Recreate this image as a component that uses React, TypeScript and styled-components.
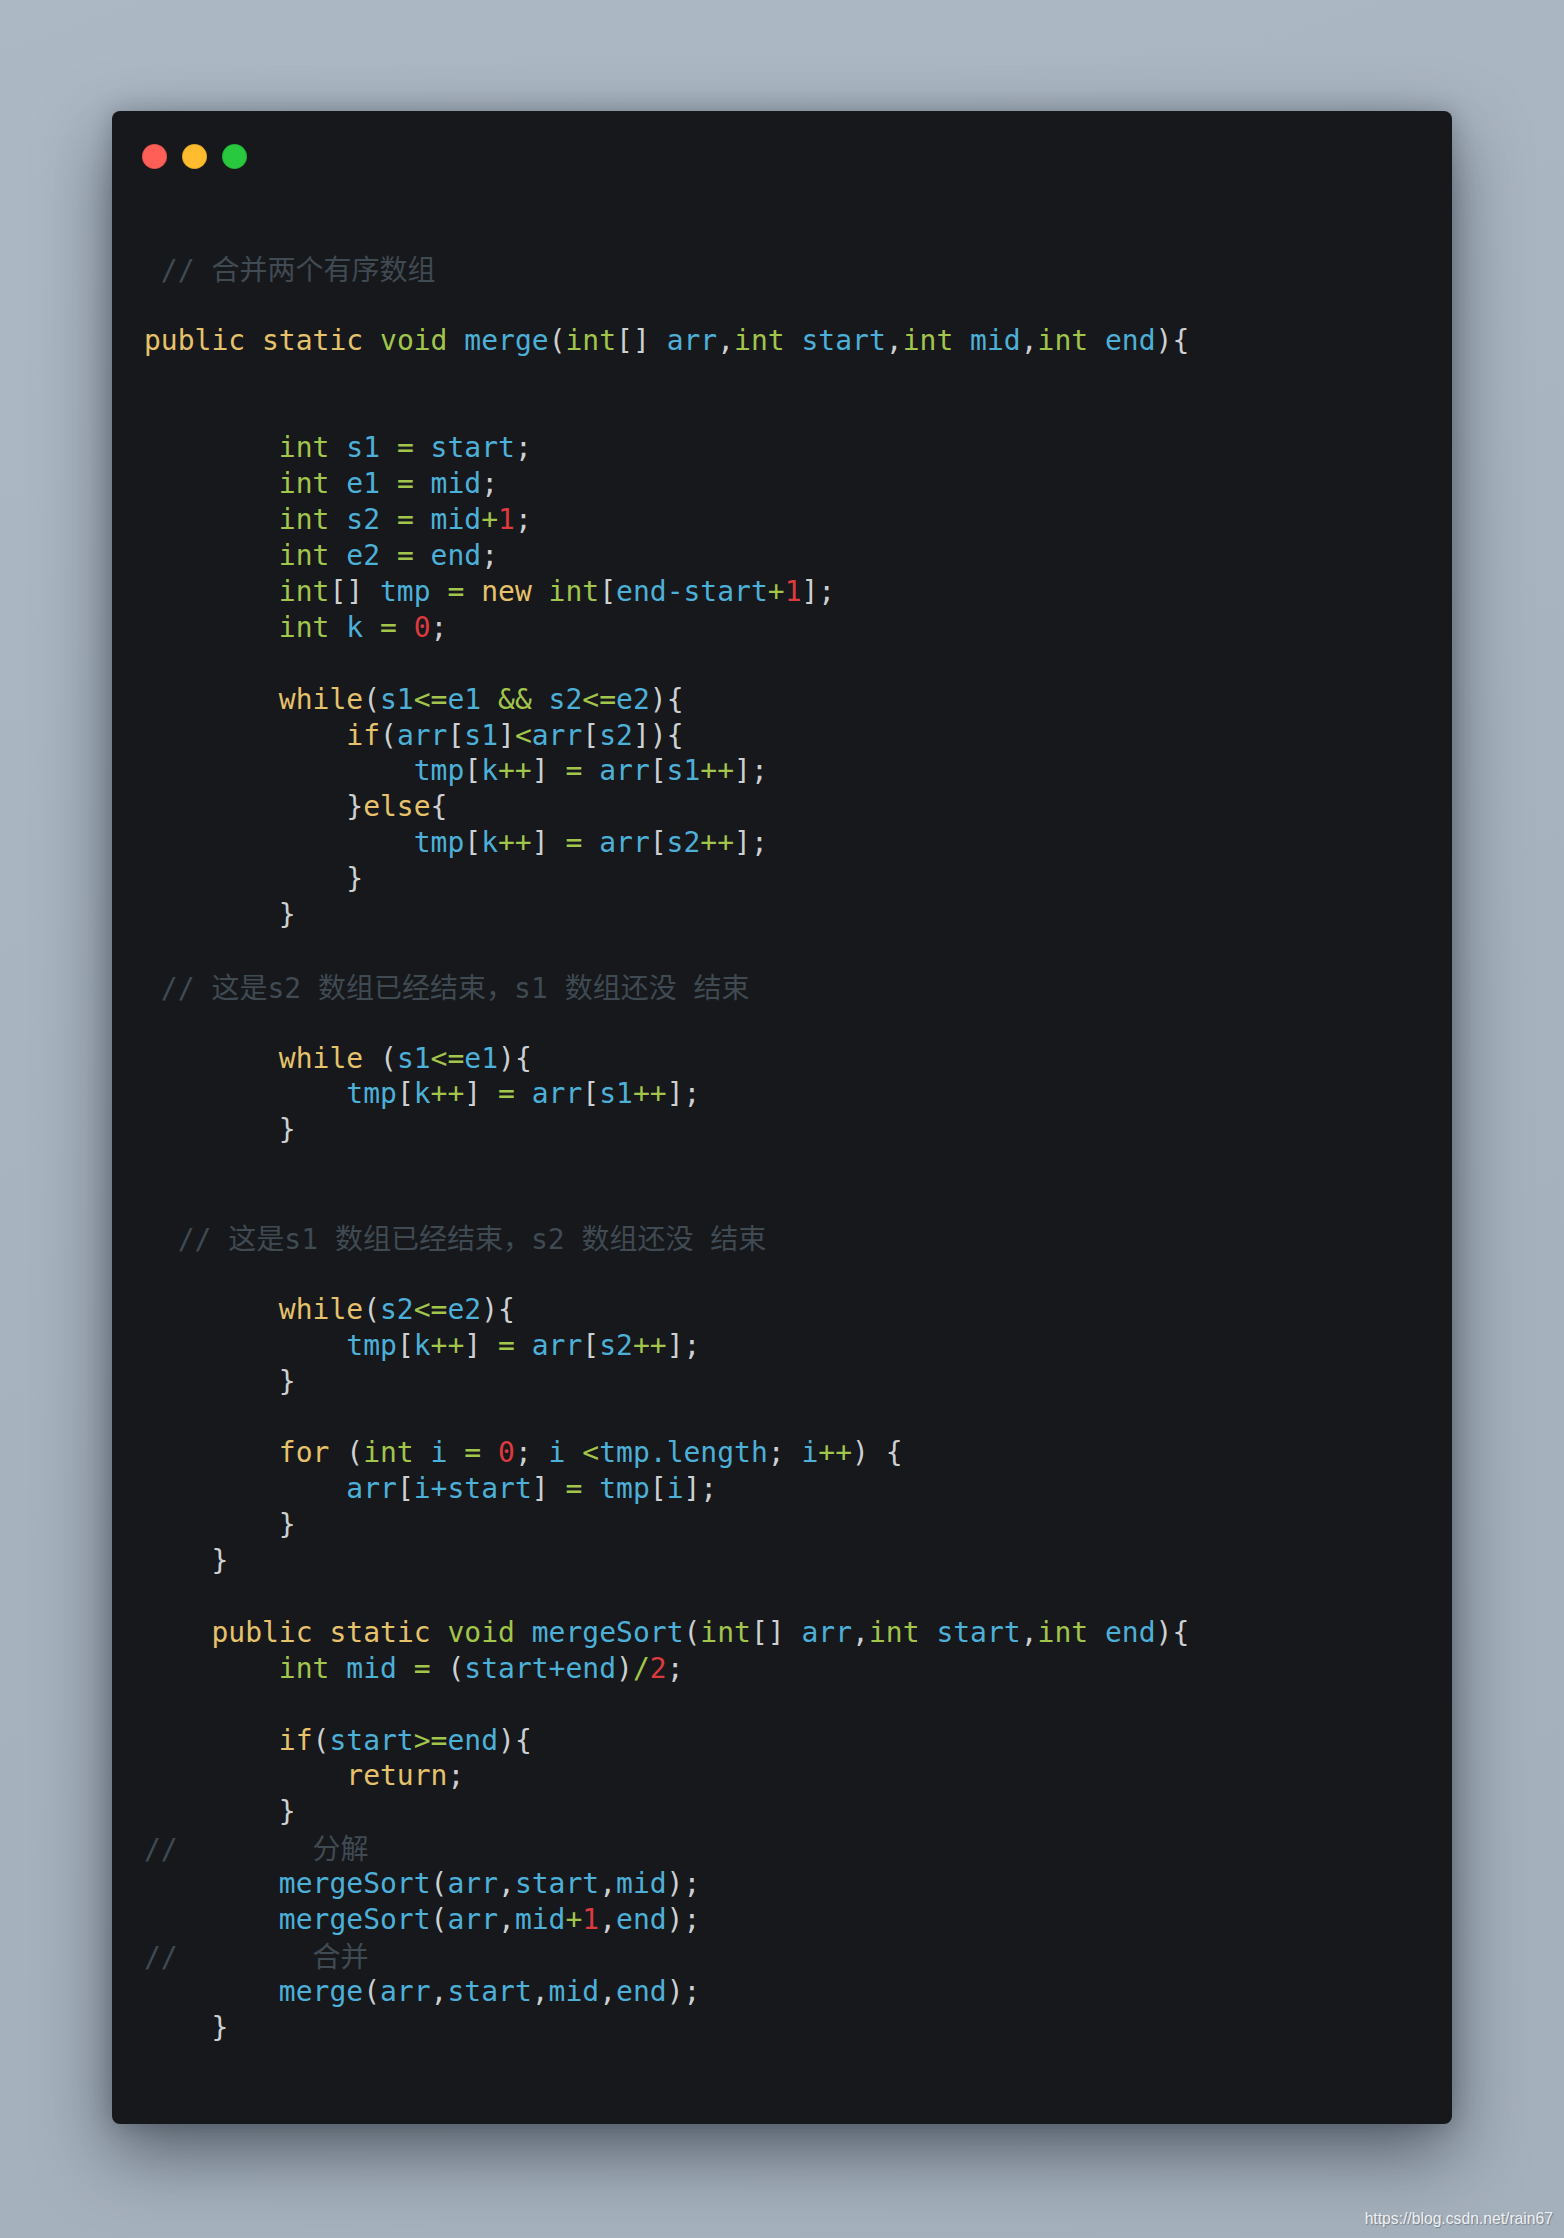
import React from "react";
import styled, { createGlobalStyle } from "styled-components";

type Kind = "kw" | "ty" | "id" | "num" | "op" | "p" | "cm";

const palette: Record<Kind, string> = {
  kw: "#e5c26b",
  ty: "#a2c54c",
  id: "#4cb0d9",
  num: "#dd3a3e",
  op: "#a2c54c",
  p: "#cdd0d2",
  cm: "#3f4a53",
};

const GlobalStyle = createGlobalStyle`
  html, body {
    margin: 0;
    padding: 0;
    background: #a8b4c0;
  }
  * { box-sizing: border-box; }
`;

const Page = styled.div`
  min-height: 2238px;
  padding: 111px 0 0 112px;
  display: flex;
  flex-direction: column;
  background: linear-gradient(160deg, #acb8c4 0%, #a6b2be 55%, #a4b0bc 100%);
`;

const Window = styled.section`
  width: 1340px;
  background: #17181b;
  border-radius: 8px;
  box-shadow: 0 28px 70px rgba(20, 28, 38, 0.55), 0 0 22px rgba(20, 28, 38, 0.22);
`;

const TitleBar = styled.div`
  display: flex;
  gap: 15px;
  padding: 33px 0 0 29.5px;
`;

const Dot = styled.span<{ $color: string }>`
  width: 25px;
  height: 25px;
  border-radius: 50%;
  background: ${(p) => p.$color};
  box-shadow: inset 0 0 0 1px rgba(0, 0, 0, 0.12);
`;

const Code = styled.pre`
  margin: 0;
  padding: 82px 0 78px 32px;
  font-family: "DejaVu Sans Mono", "Noto Sans CJK SC", monospace;
  font-size: 28px;
  color: ${palette.p};
`;

const Line = styled.div`
  height: 35.9px;
  line-height: 35.9px;
  white-space: pre;
`;

const Tok = styled.span<{ $k: Kind }>`
  color: ${(p) => palette[p.$k]};
`;

const Cjk = styled.span`
  font-family: "Noto Sans CJK SC", sans-serif;
  font-size: 28px;
`;

const Footer = styled.div`
  margin-top: 86.5px;
  padding-right: 11px;
  text-align: right;
  font-family: "Liberation Sans", Arial, sans-serif;
  font-size: 15.7px;
  line-height: 18px;
  color: #eef1f4;
  text-shadow: 1px 1px 1px rgba(0, 0, 0, 0.28);
`;

const lines: string[] = [
  " // 合并两个有序数组",
  "",
  "public static void merge(int[] arr,int start,int mid,int end){",
  "",
  "",
  "        int s1 = start;",
  "        int e1 = mid;",
  "        int s2 = mid+1;",
  "        int e2 = end;",
  "        int[] tmp = new int[end`-start+1];",
  "        int k = 0;",
  "",
  "        while(s1<=e1 && s2<=e2){",
  "            if(arr[s1]<arr[s2]){",
  "                tmp[k++] = arr[s1++];",
  "            }else{",
  "                tmp[k++] = arr[s2++];",
  "            }",
  "        }",
  "",
  " // 这是s2 数组已经结束，s1 数组还没 结束",
  "",
  "        while (s1<=e1){",
  "            tmp[k++] = arr[s1++];",
  "        }",
  "",
  "",
  "  // 这是s1 数组已经结束，s2 数组还没 结束",
  "",
  "        while(s2<=e2){",
  "            tmp[k++] = arr[s2++];",
  "        }",
  "",
  "        for (int i = 0; i <tmp`.length; i++) {",
  "            arr[i`+start] = tmp[i];",
  "        }",
  "    }",
  "",
  "    public static void mergeSort(int[] arr,int start,int end){",
  "        int mid = (start`+end)/2;",
  "",
  "        if(start>=end){",
  "            return;",
  "        }",
  "//        分解",
  "        mergeSort(arr,start,mid);",
  "        mergeSort(arr,mid+1,end);",
  "//        合并",
  "        merge(arr,start,mid,end);",
  "    }",
];

const keywords = new Set(["public", "static", "new", "while", "if", "else", "return", "for"]);
const types = new Set(["int", "void"]);

function renderComment(text: string, key: number) {
  const parts = text.split(/([\u3000-\u9fff\uff00-\uffef]+)/);
  return (
    <Tok key={key} $k="cm">
      {parts.map((part, i) =>
        /[\u3000-\u9fff\uff00-\uffef]/.test(part) ? <Cjk key={i}>{part}</Cjk> : part
      )}
    </Tok>
  );
}

function renderLine(src: string) {
  const out: React.ReactNode[] = [];
  const re = /(\/\/.*$)|(`.)|([A-Za-z_]\w*)|(\d+)|(<=|>=|&&|\+\+|[=<>+\-\/])|(\s+)|(.)/g;
  let m: RegExpExecArray | null;
  let k = 0;
  while ((m = re.exec(src)) !== null) {
    if (m[1]) out.push(renderComment(m[1], k++));
    else if (m[2]) out.push(<Tok key={k++} $k="id">{m[2].slice(1)}</Tok>);
    else if (m[3]) {
      const w = m[3];
      const kind: Kind = keywords.has(w) ? "kw" : types.has(w) ? "ty" : "id";
      out.push(<Tok key={k++} $k={kind}>{w}</Tok>);
    } else if (m[4]) out.push(<Tok key={k++} $k="num">{m[4]}</Tok>);
    else if (m[5]) out.push(<Tok key={k++} $k="op">{m[5]}</Tok>);
    else if (m[6]) out.push(m[6]);
    else if (m[7]) out.push(<Tok key={k++} $k="p">{m[7]}</Tok>);
  }
  return out;
}

export default function App() {
  return (
    <>
      <GlobalStyle />
      <Page>
        <Window>
          <TitleBar>
            <Dot $color="#ff5f57" />
            <Dot $color="#febc2e" />
            <Dot $color="#28c83f" />
          </TitleBar>
          <Code>
            {lines.map((l, i) => (
              <Line key={i}>{l.length ? renderLine(l) : " "}</Line>
            ))}
          </Code>
        </Window>
        <Footer>https://blog.csdn.net/rain67</Footer>
      </Page>
    </>
  );
}
